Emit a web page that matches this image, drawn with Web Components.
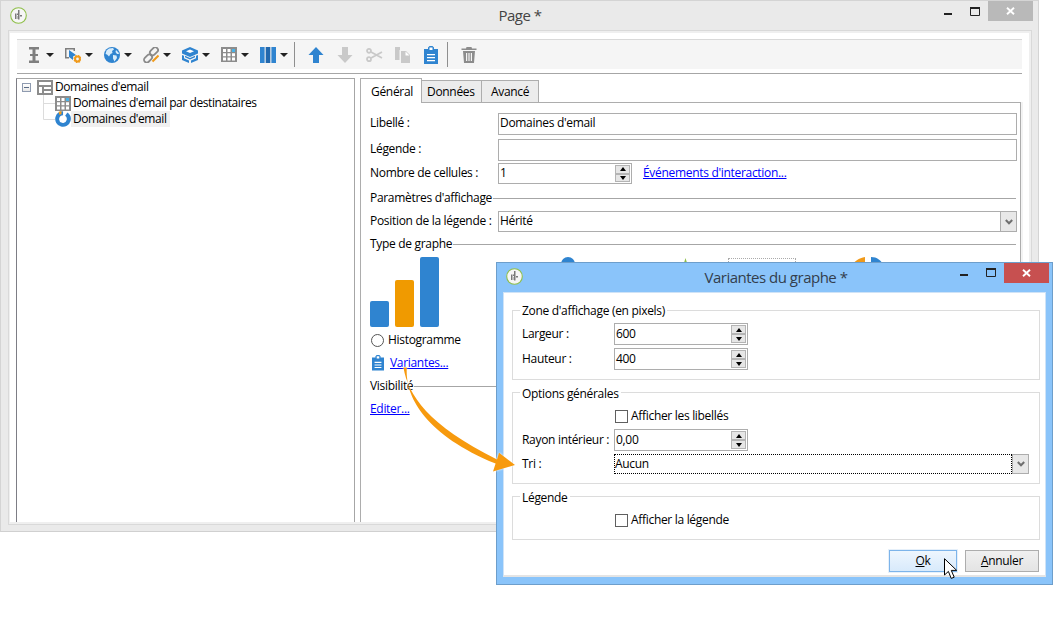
<!DOCTYPE html>
<html lang="fr"><head><meta charset="utf-8"><title>Page</title>
<style>
html,body{margin:0;padding:0;background:#fff}
body{width:1054px;height:620px;overflow:hidden;position:relative;font:12px/16px "Open Sans","Noto Sans",sans-serif;letter-spacing:-.31px;color:#000}
svg{display:block}
</style></head><body>
<main-window caption="Page *">
  <tool-bar slot="toolbar">
    <tool-btn menu><svg width="16" height="16" viewBox="0 0 16 16"><path fill="#7f7f7f" d="M3 0h10v2.500H9.500V7H12v2H9.500v4.500H13V16H3v-2.500h3.500V9H4V7h2.500V2.500H3z"/></svg></tool-btn>
    <tool-btn menu><svg width="16" height="16" viewBox="0 0 16 16"><path fill="#7f7f7f" d="M0 1h10v3H8.500V2.500h-7V10H4v1.500H0z"/><path fill="#2f84d0" d="M4 3l7 5-3 1.500V13L4 10z"/><circle cx="12.500" cy="12" r="2.400" fill="none" stroke="#f09a1a" stroke-width="2"/><circle cx="12.500" cy="12" r="3.500" fill="none" stroke="#f09a1a" stroke-width="1.200" stroke-dasharray="1.500 1.250"/></svg></tool-btn>
    <tool-btn menu><svg width="16" height="16" viewBox="0 0 16 16"><circle cx="8" cy="8" r="8" fill="#2f84d0"/><path fill="#d7ecfb" d="M5 1.500 9 1l1 1.500L8 4 8.500 6 6.500 7 5 9.500 3 7.500 1.500 7 2.500 3.500zM9 8l3.500.5L13 11l-2.500 3.500L9 11.500zM12 3l2.500 2.500L15 7l-2 0-1.500-2z"/></svg></tool-btn>
    <tool-btn menu><svg width="16" height="16" viewBox="0 0 16 16"><g fill="none" stroke="#8a8a8a" stroke-width="1.800"><rect x="8.200" y="-.2" width="5.500" height="9" rx="2.700" transform="rotate(45 11 4.300)"/><rect x="2.300" y="7" width="5.500" height="9" rx="2.700" transform="rotate(45 5 11.500)"/></g><path d="M9.500 14.500 15.500 8.500" stroke="#f09a1a" stroke-width="2"/></svg></tool-btn>
    <tool-btn menu><svg width="16" height="16" viewBox="0 0 16 16"><path fill="#2f84d0" d="M8 0l8 3.500v3L8 10 0 6.500v-3z"/><path fill="#fff" d="M8 2.500 12 4.300 8 6 4 4.300z"/><path fill="#2f84d0" d="M0 8l2 .8v2.400l5 2.200V16L0 13zM16 8l-2 .8v2.400l-5 2.200V16l7-3zM3 8.800l5 2.200 5-2.200v1.500L8 12.500 3 10.300z"/></svg></tool-btn>
    <tool-btn menu><grid-icon></grid-icon></tool-btn>
    <tool-btn menu><svg width="16" height="16" viewBox="0 0 16 16"><rect width="4.600" height="16" fill="#2f84d0"/><rect x="5.700" width="4.600" height="16" fill="#2268ad"/><rect x="11.400" width="4.600" height="16" fill="#2f84d0"/></svg></tool-btn>
    <tool-sep></tool-sep>
    <tool-btn><svg width="16" height="16" viewBox="0 0 16 16"><path fill="#2f84d0" d="M8 0l7.500 8H11v8H5V8H.500z"/></svg></tool-btn>
    <tool-btn><svg width="16" height="16" viewBox="0 0 16 16"><path fill="#c9c9c9" d="M8 16 .500 8H5V0h6v8h4.500z"/></svg></tool-btn>
    <tool-btn><svg width="17" height="16" viewBox="0 0 17 16"><g fill="none" stroke="#c9c9c9" stroke-width="1.800"><circle cx="3" cy="3.800" r="2"/><circle cx="3" cy="12.200" r="2"/><path d="M5 5 16 11M5 11 16 5"/></g></svg></tool-btn>
    <tool-btn><svg width="16" height="16" viewBox="0 0 16 16"><path fill="#c9c9c9" d="M0 0h5v3H4.500v10H0zM6 4h5l4 4v8H6z"/><path fill="#fff" d="M10.500 4.500v4h4z"/></svg></tool-btn>
    <tool-btn style="width:28px"><clip-icon></clip-icon></tool-btn>
    <tool-sep></tool-sep>
    <tool-btn><svg width="16" height="16" viewBox="0 0 16 16"><path fill="#8c8c8c" d="M5.500 0h5l.5 1.500h4.500V3H.500V1.500H5zM2 4h12l-1 12H3z"/><path fill="#f5f5f5" d="M5 6h1.200v8H5zM7.400 6h1.200v8H7.400zM9.800 6H11v8H9.800z"/></svg></tool-btn>
  </tool-bar>
  <tree-pane slot="tree">
    <tree-row>
      <tree-toggle></tree-toggle>
      <svg width="16" height="15" viewBox="0 0 16 15"><path fill="#8c8c8c" d="M0 0h16v15H0z"/><path fill="#fff" d="M2 2h12v3H2zM2 7h3v6H2zM7 7h7v2H7zM7 11h7v2H7z"/></svg>
      <span>Domaines d'email</span>
    </tree-row>
    <tree-row child><grid-icon></grid-icon><span>Domaines d'email par destinataires</span></tree-row>
    <tree-row child selected><svg width="16" height="16" viewBox="0 0 16 16"><circle cx="8" cy="8" r="5.800" fill="none" stroke="#2f84d0" stroke-width="4" stroke-dasharray="32 6" stroke-dashoffset="-2" transform="rotate(-75 8 8)"/><path d="M3.600 .8 6.500 0v3L4.500 4z" fill="#f09a1a"/></svg><span>Domaines d'email</span></tree-row>
  </tree-pane>
  <prop-pane slot="props">
    <prop-row label="Libellé :" top="10"><text-box>Domaines d'email</text-box></prop-row>
    <prop-row label="Légende :" top="4"><text-box></text-box></prop-row>
    <prop-row label="Nombre de cellules :" top="2" h="21"><spin-box style="width:134px">1</spin-box><a-link style="margin-left:11px">Événements d'interaction...</a-link></prop-row>
    <sep-title top="6">Paramètres d'affichage</sep-title>
    <prop-row label="Position de la légende :" top="5" h="21"><combo-box>Hérité</combo-box></prop-row>
    <sep-title top="4">Type de graphe</sep-title>
    <chart-row></chart-row>
    <radio-row>Histogramme</radio-row>
    <icon-row><clip-icon style="--w:12px"></clip-icon><a-link>Variantes...</a-link></icon-row>
    <sep-title top="7">Visibilité</sep-title>
    <icon-row style="margin-top:7px"><a-link>Editer...</a-link></icon-row>
  </prop-pane>
</main-window>

<dialog-window caption="Variantes du graphe *">
  <group-box title="Zone d'affichage (en pixels)" h="70" lg="-8">
    <form-line label="Largeur :" top="4"><spin-box style="width:134px">600</spin-box></form-line>
    <form-line label="Hauteur :" top="3"><spin-box style="width:134px">400</spin-box></form-line>
  </group-box>
  <group-box title="Options générales" h="92" lg="-7" style="margin-top:12px">
    <form-line top="7" h="14"><check-box>Afficher les libellés</check-box></form-line>
    <form-line label="Rayon intérieur :" top="6"><spin-box style="width:134px">0,00</spin-box></form-line>
    <form-line label="Tri :" top="3" h="20"><combo-box focus style="flex:none;width:415px">Aucun</combo-box></form-line>
  </group-box>
  <group-box title="Légende" h="44" lg="-7" style="margin-top:12px">
    <form-line top="7" h="14"><check-box>Afficher la légende</check-box></form-line>
  </group-box>
  <button-row>
    <push-btn primary><u>O</u>k</push-btn>
    <push-btn style="width:74px"><u>A</u>nnuler</push-btn>
  </button-row>
</dialog-window>

<flow-arrow></flow-arrow>
<mouse-cursor></mouse-cursor>

<script>
const def=(name,css,html,init)=>customElements.define(name,class extends HTMLElement{
  connectedCallback(){ if(this.shadowRoot) return;
    const s=this.attachShadow({mode:'open'});
    s.innerHTML='<style>'+css+'</style>'+(typeof html==='function'?html(this):html);
    if(init) init(this,s);
  }
});
const attr=(e,n,d='')=>e.getAttribute(n)??d;
const logo=`<svg width="17" height="17" viewBox="0 0 17 17"><circle cx="8.500" cy="8.500" r="7.800" fill="#f6f6f6" stroke="#8fbf4a" stroke-width="1.100"/><path fill="#7a7a7a" d="M5 6.500h1.500V12H5zM8 3h1.500v9.500H8zM10 8h2v1.500h-2zM7 6.500H8V8H7z"/><path fill="#bdbdbd" d="M6.500 9h1.500v3H6.500z"/></svg>`;
const winBtns=(closeBg)=>`<div class="btns"><svg class="min" width="8" height="2"><rect width="8" height="2" fill="#222"/></svg><svg class="max" width="10" height="9"><path fill="none" stroke="#222" d="M.5 1.500h9v7h-9z"/><rect width="10" height="2" fill="#222"/></svg><div class="close" style="background:${closeBg}"><svg width="9" height="8" viewBox="0 0 9 8"><path d="M1 .8 8 7.200M8 .8 1 7.200" stroke="#fff" stroke-width="1.900"/></svg></div></div>`;
const btnCss=`.btns{display:flex;align-items:flex-start;flex:none}.min{margin-top:12px}.max{margin:6px 0 0 18px}.close{width:45px;height:20px;margin-left:8px;display:flex;align-items:center;justify-content:center}`;
const titleCss=`.t{flex:1;text-align:center;font-size:15px;line-height:29px;padding-left:69px;letter-spacing:-.5px}`;

def('main-window',`
:host{display:flex;flex-direction:column;width:1039px;height:532px;box-sizing:border-box;background:#eaeaea;border:1px solid #d4d4d4;border-bottom-color:#d0d0d0}
.cap{height:29px;flex:none;display:flex;align-items:flex-start}
.logo{margin:6px 0 0 9px;flex:none}
${titleCss}.t{color:#444}
${btnCss}.btns{margin-right:5px}
.frame{margin:0 6px 6px 7px;flex:1;min-height:0;border:1px solid #d9d9d9;padding:2px 2px 2px 1px;background:#efefef;display:flex}
.in{flex:1;background:#fff;padding:6px 7px 0 7px;display:flex;flex-direction:column;min-width:0}
.rule{height:1px;background:#a6a6a6;margin:4px 0 0 0;width:1005px;flex:none}
.panes{flex:1;display:flex;margin:4px 0 0 -1px;min-height:0}
`,e=>`<div class="cap"><div class="logo">${logo}</div><div class="t">${attr(e,'caption')}</div>${winBtns('#b9b9b9')}</div>
<div class="frame"><div class="in"><slot name="toolbar"></slot><div class="rule"></div><div class="panes"><slot name="tree"></slot><slot name="props"></slot></div></div></div>`);

def('tool-bar',`:host{display:flex;align-items:center;width:1005px;height:30px;box-sizing:border-box;border-top:1px solid #d9d9d9;background:#f5f5f5;padding-left:9px;flex:none}`,'<slot></slot>');
def('tool-btn',`:host{display:flex;align-items:center;width:39px;height:16px;flex:none}
:host(:not([menu])){width:29px}
.a{margin-left:auto;margin-right:11px;width:0;height:0;border:4px solid transparent;border-top:4.500px solid #222;border-bottom:0}`,
 e=>`<slot></slot>${e.hasAttribute('menu')?'<i class="a"></i>':''}`);
def('tool-sep',`:host{display:block;width:1px;height:25px;background:#8f8f8f;margin:0 13px 0 -5px;flex:none}`,'');
def('grid-icon',`:host{display:block;width:16px;height:15px;flex:none}`,
 `<svg width="16" height="15" viewBox="0 0 16 15"><rect width="16" height="15" fill="#8c8c8c"/><g fill="#fff"><path d="M2 2h3v3H2zM6.500 2h3v3h-3zM2 6.200h3v3H2zM6.500 6.200h3v3h-3zM11 6.200h3v3h-3zM2 10.400h3v3H2zM6.500 10.400h3v3h-3zM11 10.400h3v3h-3z"/></g><path fill="#49b3e8" d="M11 2h3v3h-3z"/></svg>`);
def('clip-icon',`:host{display:block;flex:none;width:var(--w,14px)}svg{display:block;width:100%}`,
 `<svg viewBox="0 0 14 18"><path fill="#2f84d0" d="M0 3h4V1.500L5.500 0h3L10 1.500V3h4v15H0z"/><path fill="#fff" d="M5.500 1.500h3V4h-3zM3 8h8v1.300H3zM3 11h8v1.300H3zM3 14h8v1.300H3z"/></svg>`);

def('tree-pane',`:host{display:block;width:339px;box-sizing:border-box;border:1px solid #a6a6a6;border-left-color:#7d7d85;border-bottom:0;position:relative;flex:none;letter-spacing:-.42px}
svg{position:absolute;left:0;top:0;pointer-events:none}`,
 `<svg width="60" height="50"><path d="M26.500 16v24.500M26.500 24.500H38M26.500 40.500H38" fill="none" stroke="#dcdcdc"/></svg><slot></slot>`);
def('tree-row',`:host{display:flex;align-items:center;height:16px;padding-left:5px;position:relative;gap:2px;white-space:nowrap}
:host([child]){padding-left:38px}
:host([selected]) ::slotted(span){background:#f0f0f0;height:16px;padding:0 3px 0 2px;margin-left:-2px}`,'<slot></slot>');
def('tree-toggle',`:host{display:block;width:9px;height:9px;box-sizing:border-box;border:1px solid #8f9bb0;margin-right:4px;flex:none;background:linear-gradient(#fff,#e8e8e8)}
i{display:block;height:1px;background:#5a6b86;margin:3px 1px 0}`,'<i></i>');

def('prop-pane',`:host{display:flex;flex-direction:column;width:661px;margin-left:5px;flex:none;min-width:0}
.tabs{display:flex;height:25px;align-items:flex-end;flex:none;position:relative;z-index:1;margin-bottom:-1px}
.tab{box-sizing:border-box;height:23px;border:1px solid #adadad;border-left:0;background:#ececec;padding:0 0 0 5px;line-height:21px;flex:none}
.tab.on{height:25px;width:62px;border-left:1px solid #adadad;background:#fff;border-bottom:0;padding:0 0 0 10px;line-height:25px}
.body{flex:1;border:1px solid #adadad;border-bottom:0;display:flex;flex-direction:column;padding:0 3px 0 9px;box-shadow:2px 0 0 #f3f3f3}`,
 `<div class="tabs"><div class="tab on">Général</div><div class="tab" style="width:60px">Données</div><div class="tab" style="width:57px;padding-left:9px">Avancé</div></div><div class="body"><slot></slot></div>`);
def('prop-row',`:host{display:flex;align-items:center;flex:none;--pb:2px}
.l{width:128px;flex:none;white-space:nowrap;padding-bottom:2px}
.c{flex:1;display:flex;align-items:center;min-width:0;height:100%}`,
 e=>{e.style.marginTop=attr(e,'top','0')+'px';e.style.height=attr(e,'h','22')+'px';return `<div class="l">${attr(e,'label')}</div><div class="c"><slot></slot></div>`});
def('form-line',`:host{display:flex;align-items:center;flex:none;padding-left:9px}
.l{width:92px;flex:none;white-space:nowrap}
.c{flex:1;display:flex;align-items:center;height:100%}`,
 e=>{e.style.marginTop=attr(e,'top','0')+'px';e.style.height=attr(e,'h','22')+'px';return `<div class="l">${attr(e,'label')}</div><div class="c"><slot></slot></div>`});
def('text-box',`:host{display:flex;align-items:center;flex:1;height:100%;box-sizing:border-box;border:1px solid #adadad;padding:0 0 var(--pb,0) 1px;background:#fff;white-space:nowrap}`,'<slot></slot>');
def('spin-box',`:host{display:flex;align-items:center;height:100%;box-sizing:border-box;border:1px solid #adadad;padding-left:1px;background:#fff;flex:none}
.t{flex:1;padding-bottom:var(--pb,0)}.s{display:flex;flex-direction:column;width:15px;margin-right:1px;height:100%;box-sizing:border-box;padding:1px 0}
.s b{flex:1;display:flex;align-items:center;justify-content:center;background:#e6e6e6;border:1px solid #b4b4b4}
i{width:0;height:0;border:3.500px solid transparent}
.u{border-top:0;border-bottom:4px solid #000}.d{border-bottom:0;border-top:4px solid #000}`,
 `<div class="t"><slot></slot></div><div class="s"><b><i class="u"></i></b><b><i class="d"></i></b></div>`);
def('combo-box',`:host{display:flex;align-items:center;flex:1;height:100%;box-sizing:border-box;background:#fff}
.t{flex:1;height:100%;display:flex;align-items:center;box-sizing:border-box;border:1px solid #adadad;border-right:0;padding:0 0 var(--pb,0) 1px}
:host([focus]) .t{border:1px dotted #000;padding-left:0}
.b{width:17px;height:100%;box-sizing:border-box;border:1px solid #adadad;background:#e8e8e8;display:flex;align-items:center;justify-content:center;flex:none}`,
 `<div class="t"><slot></slot></div><div class="b"><svg width="8" height="6" viewBox="0 0 8 6"><path d="M.8 1 4 4.300 7.200 1" fill="none" stroke="#6f6f6f" stroke-width="2"/></svg></div>`);
def('a-link',`:host{color:#00f;text-decoration:underline;white-space:nowrap;flex:none;margin-bottom:var(--pb,0)}`,'<slot></slot>');
def('sep-title',`:host{display:flex;align-items:center;height:16px;flex:none;white-space:nowrap;margin-right:1px}
i{flex:1;height:1px;background:#a6a6a6;margin-left:1px}`,
 e=>{e.style.marginTop=attr(e,'top','0')+'px';return '<slot></slot><i></i>'});
def('chart-row',`:host{display:flex;margin-top:5px;height:70px;flex:none;align-items:flex-start}
.bars{display:flex;align-items:flex-end;height:70px;gap:6px;width:70px;flex:none}
.bars i{display:block;width:19px;border-radius:2px;flex:none}`,
 `<div class="bars"><i style="height:26px;background:#2f84d0"></i><i style="height:47px;background:#f09a00"></i><i style="height:70px;background:#2f84d0"></i></div>
 <svg style="margin-left:121px;flex:none" width="14" height="14"><circle cx="7" cy="7" r="7" fill="#2f84d0"/></svg>
 <svg style="margin-left:108px;margin-top:1px;flex:none" width="5" height="8"><path d="M2.500 0 5 8H0z" fill="#8fbf4a"/></svg>
 <div style="margin:1px 0 0 40px;width:68px;height:20px;box-sizing:border-box;border:1px dotted #aaa;flex:none"></div>
 <svg style="margin-left:55px;flex:none" width="14" height="10"><path d="M14 0v10H0C3 4 8 1 14 0z" fill="#f09a1a"/></svg>
 <svg style="margin-left:6px;flex:none" width="14" height="10"><path d="M0 0c6 0 10 3 14 10H0z" fill="#2f84d0"/></svg>`);
def('radio-row',`:host{display:flex;align-items:center;height:16px;margin-top:5px;flex:none;gap:4px;padding-left:1px}
i{width:13px;height:13px;box-sizing:border-box;border:1px solid #555;border-radius:50%;background:#fff}`,'<i></i><slot></slot>');
def('icon-row',`:host{display:flex;align-items:center;height:16px;margin-top:7px;flex:none;gap:6px;padding-left:2px}
:host(:last-child){padding-left:0}`,'<slot></slot>');

def('dialog-window',`:host{position:absolute;left:496px;top:262px;width:557px;height:323px;box-sizing:border-box;background:#8ac4fa;border:1px solid #6d9ecb;display:flex;flex-direction:column;z-index:2}
.cap{height:29px;flex:none;display:flex;align-items:flex-start}
.logo{margin:5px 0 0 9px;flex:none}
${titleCss}.t{color:#333e4d}
${btnCss}.btns{margin-right:3px}.min{margin-top:11px}.max{margin-top:5px}
.in{margin:0 6px 7px 6px;flex:1;min-height:0;background:#fff;box-sizing:border-box;border:1px solid #cfe3f7;border-bottom:2px solid #e4e4e4;padding:17px 5px 0 8px;display:flex;flex-direction:column}`,
 e=>`<div class="cap"><div class="logo">${logo}</div><div class="t">${attr(e,'caption')}</div>${winBtns('#c75050')}</div><div class="in"><slot></slot></div>`);
def('group-box',`:host{display:block;box-sizing:border-box;border:1px solid #dcdcdc;flex:none}
.lg{margin:-9px 0 0 7px;width:fit-content;height:16px;background:#fff;padding:0 2px;white-space:nowrap}`,
 e=>{e.style.height=attr(e,'h')+'px';return `<div class="lg" style="margin-top:${attr(e,'lg','-9')}px">${attr(e,'title')}</div><slot></slot>`});
def('check-box',`:host{display:flex;align-items:center;gap:3px;margin-left:1px;height:14px;white-space:nowrap}
i{width:13px;height:13px;box-sizing:border-box;border:1px solid #5f5f5f;background:#fff;flex:none}`,'<i></i><slot></slot>');
def('button-row',`:host{display:flex;justify-content:flex-end;gap:8px;margin-top:10px;padding-right:1px;flex:none}`,'<slot></slot>');
def('push-btn',`:host{display:flex;align-items:center;justify-content:center;width:68px;height:22px;box-sizing:border-box;border:1px solid #adadad;background:linear-gradient(#f0f0f0,#e4e4e4);flex:none}
:host([primary]){border-color:#7db4ea;background:linear-gradient(#eef6fe,#d8eafb);box-shadow:0 0 0 1px #e6f0fa}`,'<slot></slot>');

def('flow-arrow',`:host{position:absolute;left:0;top:0;width:0;height:0;z-index:3}
svg{position:absolute;left:395px;top:360px;filter:drop-shadow(0 0 1px #fff)}`,
 `<svg width="130" height="120" viewBox="395 360 130 120"><path fill="#f79a0e" d="M403.500 367.500C408 395 428 425 497 459.500L499 452.800 515 465 493 471.500 495.600 463.500C424 434 405 396 406.800 367.500z"/></svg>`);
def('mouse-cursor',`:host{position:absolute;left:944px;top:558px;width:13px;height:22px;z-index:4}`,
 `<svg width="13" height="22" viewBox="0 0 13 22"><path d="M.5.700V17l3.900-3.600 2.800 7 3-1.200-2.900-6.800h5.400z" fill="#fff" stroke="#000" stroke-width="1"/></svg>`);
</script>
</body></html>
